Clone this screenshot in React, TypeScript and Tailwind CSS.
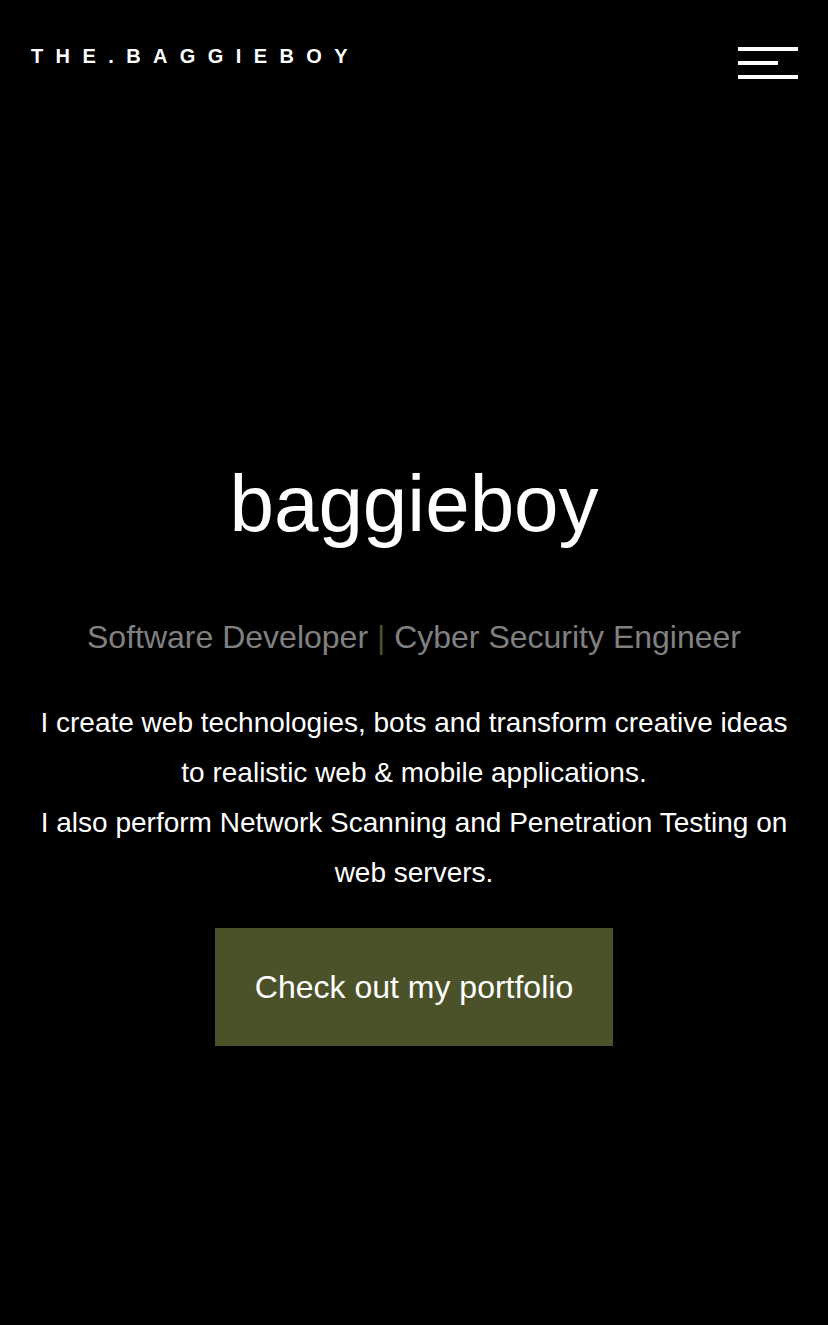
import React from 'react';

const font = { fontFamily: '"Liberation Sans", Arial, sans-serif' };

function Header() {
  return (
    <header className="flex items-start justify-between pl-[31px] pr-[30px] pt-[40px]">
      <div className="text-[20px] leading-[32px] font-bold text-white tracking-[12.4px]">THE.BAGGIEBOY</div>
      <button aria-label="Open menu" className="mt-[7px] flex flex-col items-start gap-[10px] w-[60px]">
        <span className="block h-[4px] w-[60px] bg-white" />
        <span className="block h-[4px] w-[40px] bg-white" />
        <span className="block h-[4px] w-[60px] bg-white" />
      </button>
    </header>
  );
}

export default function App() {
  return (
    <div className="min-h-[1325px] bg-black text-white" style={font}>
      <Header />
      <main className="flex flex-col items-center text-center pt-[385px]">
        <h1 className="text-[80px] leading-[80px] font-normal">baggieboy</h1>
        <p className="mt-[74px] text-[32px] leading-[38px] text-[#808080]">
          Software Developer <span className="text-[#4b5229]">|</span> Cyber Security Engineer
        </p>
        <p className="mt-[42px] max-w-[780px] px-[10px] text-[28px] leading-[50px] text-white">
          I create web technologies, bots and transform creative ideas to realistic web &amp; mobile applications.
          <br />
          I also perform Network Scanning and Penetration Testing on web servers.
        </p>
        <a
          href="#portfolio"
          className="mt-[30px] bg-[#4b5229] px-[40px] py-[40px] text-[32px] leading-[38px] text-white"
        >
          Check out my portfolio
        </a>
      </main>
    </div>
  );
}
